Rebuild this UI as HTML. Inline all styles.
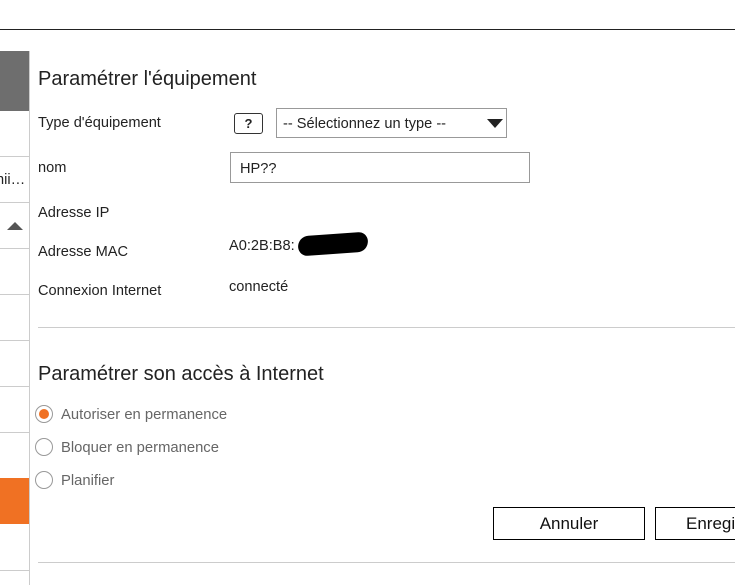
<!DOCTYPE html>
<html><head><meta charset="utf-8"><style>
body{margin:0;width:735px;height:585px;overflow:hidden;background:#fff;font-family:"Liberation Sans",Arial,sans-serif;position:relative}
div,span{position:absolute;box-sizing:border-box}
.t{font-size:14.6px;color:#222;white-space:nowrap}
.h{font-size:20px;color:#222;white-space:nowrap}
.hl{left:0;width:29px;height:1px;background:#ccc}
.r{width:18px;height:18px;border:1px solid #999;border-radius:50%;left:35px}
.rl{font-size:14.8px;color:#666;left:61px;white-space:nowrap}
</style></head><body>
<div style="left:0;top:29px;width:735px;height:1px;background:#222"></div>
<div style="left:29px;top:51px;width:1px;height:534px;background:#ccc"></div>
<div style="left:0;top:51px;width:29px;height:60px;background:#6e6e6e"></div>
<div class="hl" style="top:156px"></div>
<div class="t" style="left:-4px;top:172px">nii…</div>
<div class="hl" style="top:202px"></div>
<div style="left:7px;top:222px;width:0;height:0;border-left:8px solid transparent;border-right:8px solid transparent;border-bottom:8px solid #555"></div>
<div class="hl" style="top:248px"></div>
<div class="hl" style="top:294px"></div>
<div class="hl" style="top:340px"></div>
<div class="hl" style="top:386px"></div>
<div class="hl" style="top:432px"></div>
<div style="left:0;top:478px;width:29px;height:46px;background:#f07123"></div>
<div class="hl" style="top:570px"></div>

<div class="h" style="left:38px;top:68px">Paramétrer l'équipement</div>
<div class="t" style="left:38px;top:115px">Type d'équipement</div>
<div style="left:234px;top:113px;width:29px;height:21px;border:1px solid #333;border-radius:3px;font-size:13px;font-weight:bold;text-align:center;line-height:19px;color:#222">?</div>
<div style="left:276px;top:108px;width:231px;height:30px;border:1px solid #999;font-size:14.6px;color:#222;padding:7px 0 0 6px">-- Sélectionnez un type --</div>
<div style="left:487px;top:119px;width:0;height:0;border-left:8px solid transparent;border-right:8px solid transparent;border-top:9px solid #222"></div>
<div class="t" style="left:38px;top:160px">nom</div>
<div style="left:230px;top:152px;width:300px;height:31px;border:1px solid #999;font-size:14.6px;color:#222;padding:8px 0 0 9px">HP??</div>
<div class="t" style="left:38px;top:205px">Adresse IP</div>
<div class="t" style="left:38px;top:244px">Adresse MAC</div>
<div class="t" style="left:229px;top:238px">A0:2B:B8:</div>
<div style="left:298px;top:234px;width:70px;height:20px;background:#000;border-radius:12px 10px 12px 10px;transform:rotate(-4deg)"></div>
<div class="t" style="left:38px;top:283px">Connexion Internet</div>
<div class="t" style="left:229px;top:279px">connecté</div>
<div style="left:38px;top:327px;width:697px;height:1px;background:#ccc"></div>

<div class="h" style="left:38px;top:363px">Paramétrer son accès à Internet</div>
<div class="r" style="top:405px"><span style="left:3px;top:3px;width:10px;height:10px;border-radius:50%;background:#f07123"></span></div>
<div class="rl" style="top:407px">Autoriser en permanence</div>
<div class="r" style="top:438px"></div>
<div class="rl" style="top:440px">Bloquer en permanence</div>
<div class="r" style="top:471px"></div>
<div class="rl" style="top:473px">Planifier</div>
<div style="left:493px;top:507px;width:152px;height:33px;border:1px solid #000;font-size:17px;text-align:center;line-height:31px;color:#111">Annuler</div>
<div style="left:655px;top:507px;width:100px;height:33px;border:1px solid #000;font-size:17px;line-height:31px;color:#111;padding-left:30px">Enregistrer</div>
<div style="left:38px;top:562px;width:697px;height:1px;background:#ccc"></div>
</body></html>
